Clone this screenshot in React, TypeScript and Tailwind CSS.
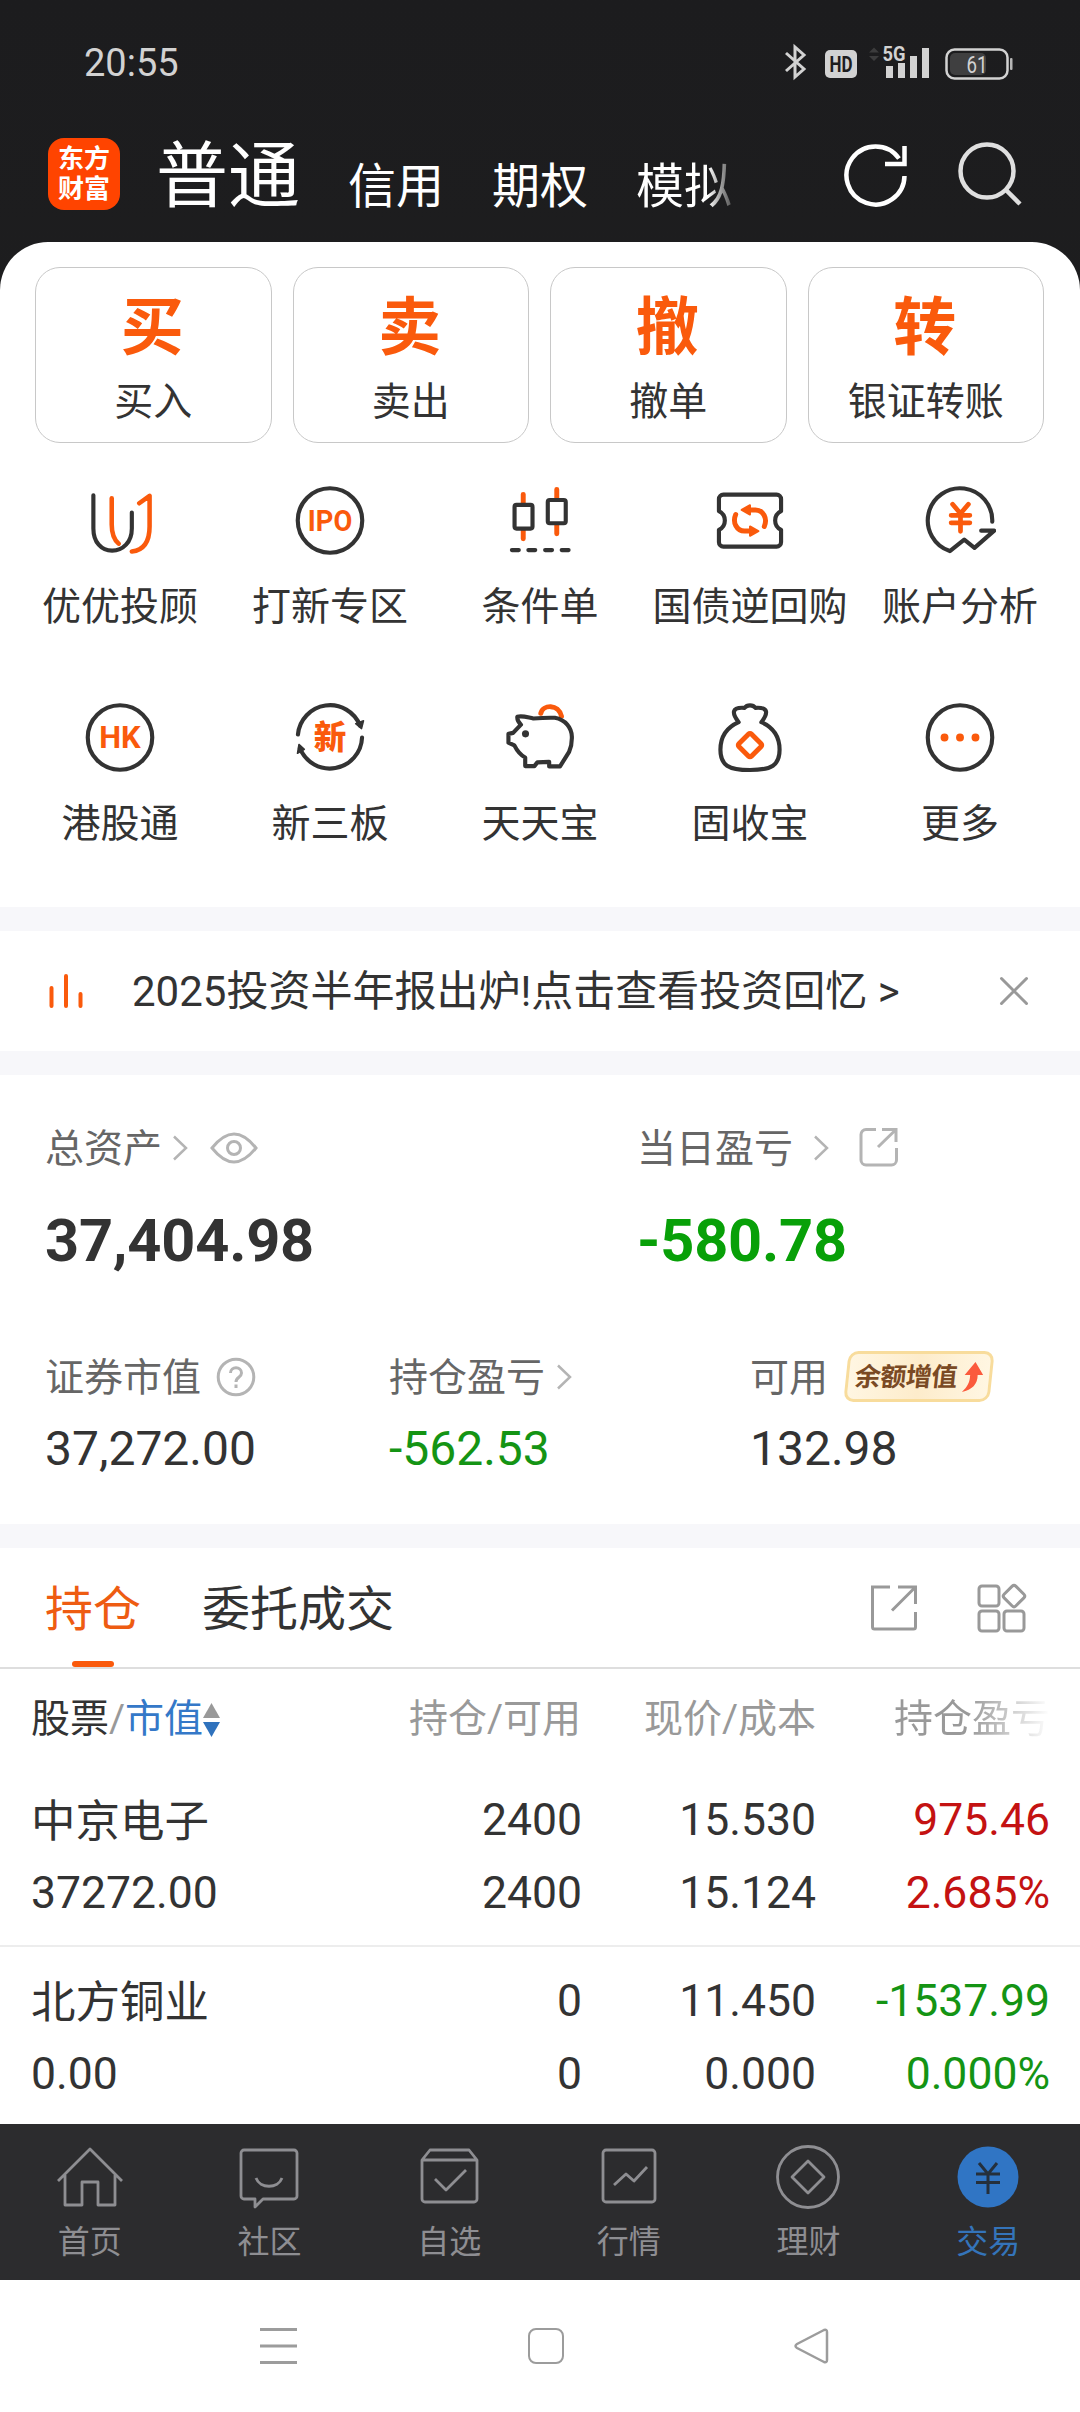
import React from 'react'
import clsx from 'clsx'

const ORANGE = '#fa5a0c'
const DARK = '#333333'

/* ---------- Status bar ---------- */

function StatusBar() {
  return (
    <div className="flex h-[126px] items-center justify-between pl-[84px] pr-[67px]">
      <span className="text-[38px] leading-none text-[#d2d2d2]">20:55</span>
      <svg className="mb-[2px]" width="232" height="40" viewBox="0 0 232 40" fill="none">
        {/* bluetooth */}
        <path d="M5 11l18 16-9 8V5l9 8L5 29" stroke="#d2d2d2" strokeWidth="3" />
        {/* HD */}
        <rect x="44" y="8" width="32" height="28" rx="5" fill="#d2d2d2" />
        <text x="60" y="30" textAnchor="middle" fontSize="22" fontWeight="700" textLength="23" lengthAdjust="spacingAndGlyphs" fill="#1d1d1e">HD</text>
        {/* signal */}
        <path d="M88 10.500l5-5 5 5zM88 14l5 5 5-5z" fill="#3c3c3d" />
        <text x="101.500" y="18.500" fontSize="20" fontWeight="700" textLength="23" lengthAdjust="spacingAndGlyphs" fill="#d2d2d2">5G</text>
        <path d="M105 24h7v12h-7zM117 21h7v15h-7zM129 14h7v22h-7zM141 6h7v30h-7z" fill="#d2d2d2" />
        {/* battery */}
        <rect x="165.500" y="7.500" width="61" height="29" rx="8" stroke="#d2d2d2" strokeWidth="2.500" />
        <rect x="169" y="11" width="36" height="22" rx="5" fill="#3f3f40" />
        <rect x="229" y="16" width="2.500" height="12" rx="1" fill="#b5b5b5" />
        <text x="196" y="30.500" textAnchor="middle" fontSize="24" textLength="21" lengthAdjust="spacingAndGlyphs" fill="#d2d2d2">61</text>
      </svg>
    </div>
  )
}

/* ---------- Header ---------- */

function Header() {
  return (
    <div className="flex h-[116px] text-white">
      <div className="ml-12 mt-3 flex h-[72px] w-[72px] flex-col items-center justify-center rounded-[16px] bg-[#ff4400] text-[26px] font-bold leading-[30px]">
        <span>东方</span>
        <span>财富</span>
      </div>
      <div className="ml-9 flex items-start gap-12 whitespace-nowrap">
        <span className="mt-[3px] text-[72px] leading-[96px]">普通</span>
        <span className="mt-[29px] text-[48px] leading-[64px]">信用</span>
        <span className="mt-[29px] text-[48px] leading-[64px]">期权</span>
        <span className="mt-[29px] bg-linear-to-r from-white from-75% to-[#555] bg-clip-text text-[48px] leading-[64px] text-transparent">模拟</span>
      </div>
      <svg className="ml-[111px] mt-[15px]" width="68" height="68" viewBox="0 0 68 68" fill="none" stroke="#fff" strokeWidth="4.500">
        <path d="M61.500 35A29 29 0 1 1 56 17.500" />
        <path d="M61.500 5v18H42" />
      </svg>
      <svg className="ml-[45px] mt-[15px]" width="68" height="68" viewBox="0 0 68 68" fill="none" stroke="#dfdfdf" strokeWidth="4.500">
        <circle cx="31" cy="30" r="26.500" />
        <path d="M50 49l14 14" />
      </svg>
    </div>
  )
}

/* ---------- Quick actions ---------- */

const actions = [
  { mark: '买', label: '买入' },
  { mark: '卖', label: '卖出' },
  { mark: '撤', label: '撤单' },
  { mark: '转', label: '银证转账' },
]

function QuickActions() {
  return (
    <div className="grid grid-cols-4 gap-[21px] pl-[35px] pr-9 pt-[25px]">
      {actions.map((a) => (
        <div key={a.label} className="flex h-[176px] flex-col items-center rounded-[25px] border border-[#c8c8c8]">
          <span className="mr-[2px] mt-[28px] text-[63px] font-bold leading-[64px] text-[#fa5a0c]">{a.mark}</span>
          <span className="mt-[20px] text-[39px] leading-[44px]">{a.label}</span>
        </div>
      ))}
    </div>
  )
}

/* ---------- Feature grid ---------- */

const YouIcon = () => (
  <>
    <path d="M9 10.500V44c0 14 8 22.500 19 22.500S48 58 48 44V28" />
    <path d="M27.600 13.500V40c0 9 2 15 7 19.500M55.500 18.500L66 11v31c0 15-6 24-18 25.500" stroke={ORANGE} strokeWidth="4.600" />
  </>
)

const IpoIcon = () => (
  <>
    <circle cx="36" cy="36" r="32.700" />
    <text x="36" y="46.800" textAnchor="middle" fontSize="30" fontWeight="700" textLength="45" lengthAdjust="spacingAndGlyphs" fill={ORANGE} stroke="none">IPO</text>
  </>
)

const CandleIcon = () => (
  <>
    <path d="M19 9.500V19M19 46v8.500M53 4.500V14M53 40v9.500" stroke={ORANGE} strokeWidth="5" />
    <rect x="10.200" y="20.200" width="18.200" height="24" rx="2" />
    <rect x="43.900" y="15.200" width="18.200" height="23.600" rx="2" />
    <path d="M7.500 66h7M24.200 66h7M41.200 66h7M58 66h7" />
  </>
)

const TicketIcon = () => (
  <>
    <path d="M9 9.700H63a4.500 4.500 0 0 1 4.500 4.500V26.500c-8 4-8 15 0 19V58a4.500 4.500 0 0 1-4.500 4.500H9A4.500 4.500 0 0 1 4.500 58V45.500c8-4 8-15 0-19V14.200A4.500 4.500 0 0 1 9 9.700z" />
    <g stroke={ORANGE} strokeWidth="5">
      <path d="M21.500 30c-3.500 8 1 16.700 9 16.700H37M50.500 42c3.500-8-1-16.700-9-16.700H35" />
      <path d="M36 42v9.500l8.500-4.800zM36 20.500v9.500l-8.500-4.700z" fill={ORANGE} strokeWidth="2" />
    </g>
  </>
)

const AnalysisIcon = () => (
  <>
    <path d="M68.700 37.300A32.700 32.700 0 1 0 25.700 67l14.600-11.700 10.400 8.400 20-17.400H57.500" />
    <path d="M28.500 19.500L36.500 29l8-9.500M27 30.800h19M27 38.300h19M36.500 29v18" stroke={ORANGE} strokeWidth="4.800" />
  </>
)

const HkIcon = () => (
  <>
    <circle cx="36" cy="36" r="32.700" />
    <text x="36" y="47" textAnchor="middle" fontSize="31" fontWeight="700" textLength="42" lengthAdjust="spacingAndGlyphs" fill={ORANGE} stroke="none">HK</text>
  </>
)

const XinIcon = () => (
  <>
    <path d="M3.500 33A32.700 32.700 0 0 1 66.500 24M68.500 36A32.700 32.700 0 0 1 5.500 47" />
    <path d="M62 23l8-3-2 8zM10 49l-7 4 1.500-9z" fill={DARK} strokeWidth="1.500" transform="translate(0 -1)" />
    <text x="36" y="47.500" textAnchor="middle" fontSize="33" fontWeight="900" fill={ORANGE} stroke="none">新</text>
  </>
)

const PigIcon = () => (
  <>
    <path d="M36.800 11.500c2-9 18-10 21 3" stroke={ORANGE} strokeWidth="5" />
    <path d="M13 15c5-1.500 10 .5 16.300 1.700C38 16 44 15.800 51 16c11 2 17 10 17.300 19 .2 6-.8 11-2.800 15.500L56.300 65.300h-11v-4.600l-12 .5-3 3.800H21v-8.700C15.500 53.500 12.500 49 10 44l-6-2.700v-9l4.700-1 8-8.300c-2.500-2.300-4-5-3.700-8z" />
    <circle cx="21.300" cy="32.300" r="3.600" fill={DARK} stroke="none" />
  </>
)

const BagIcon = () => (
  <>
    <path d="M24.500 20.500C12 26 6 36 6 48.500 6 64 14 69 36 69s30-5 30-20.500C66 36 60 26 47.500 20.500c7-9 7.500-15.500-6-14.500-2.500-3.500-8.500-3.500-11 0-13.500-1-13 5.500-6 14.500z" />
    <rect x="27" y="34.700" width="18" height="18" rx="2" transform="rotate(45 36 43.700)" stroke={ORANGE} strokeWidth="5" />
  </>
)

const MoreIcon = () => (
  <>
    <circle cx="36" cy="36" r="32.700" />
    <path d="M20.300 36h.01M36 36h.01M51.700 36h.01" stroke={ORANGE} strokeWidth="8" />
  </>
)

const features = [
  { label: '优优投顾', Icon: YouIcon },
  { label: '打新专区', Icon: IpoIcon },
  { label: '条件单', Icon: CandleIcon },
  { label: '国债逆回购', Icon: TicketIcon },
  { label: '账户分析', Icon: AnalysisIcon },
  { label: '港股通', Icon: HkIcon },
  { label: '新三板', Icon: XinIcon },
  { label: '天天宝', Icon: PigIcon },
  { label: '固收宝', Icon: BagIcon },
  { label: '更多', Icon: MoreIcon },
]

function FeatureGrid() {
  return (
    <div className="grid grid-cols-5 gap-y-[73px] px-[15px] pt-[42px]">
      {features.map(({ label, Icon }) => (
        <div key={label} className="flex h-[144px] flex-col items-center">
          <svg width="72" height="72" viewBox="0 0 72 72" fill="none" stroke={DARK} strokeWidth="4.200" strokeLinecap="round" strokeLinejoin="round">
            <Icon />
          </svg>
          <span className="mt-[29px] whitespace-nowrap text-[39px] leading-[44px]">{label}</span>
        </div>
      ))}
    </div>
  )
}

/* ---------- Notice ---------- */

function Notice() {
  return (
    <div className="flex h-[120px] items-center bg-white pl-[49px] pr-[51px]">
      <svg width="36" height="36" viewBox="0 0 36 36" stroke={ORANGE} strokeWidth="4" strokeLinecap="round">
        <path d="M2.500 15v18M17 3v30M31.500 21v12" />
      </svg>
      <span className="ml-[47px] mt-[2px] text-[42px] leading-none">2025投资半年报出炉!点击查看投资回忆 &gt;</span>
      <svg className="ml-auto" width="30" height="30" viewBox="0 0 30 30" stroke="#999" strokeWidth="3" strokeLinecap="round">
        <path d="M2.500 2.500l25 25M27.500 2.500l-25 25" />
      </svg>
    </div>
  )
}

/* ---------- Assets ---------- */

function Chevron({ className }: { className?: string }) {
  return (
    <svg className={className} width="16" height="26" viewBox="0 0 16 26" fill="none" stroke="#b4b4b4" strokeWidth="2.500">
      <path d="M2 1.500L14 13 2 24.500" />
    </svg>
  )
}

function Assets() {
  return (
    <div className="h-[449px] bg-white pl-[45px]">
      <div className="flex pt-[49px]">
        <div className="w-[592px]">
          <div className="flex h-12 items-center text-[39px] text-[#666]">
            <span className="mt-[2px]">总资产</span>
            <Chevron className="ml-[10px]" />
            <svg className="ml-[22px]" width="48" height="34" viewBox="0 0 48 34" fill="none" stroke="#b4b4b4" strokeWidth="3">
              <path d="M2 17C10 7 17 3 24 3s14 4 22 14c-8 10-15 14-22 14S10 27 2 17z" />
              <circle cx="24" cy="17" r="6.500" />
            </svg>
          </div>
          <div className="mt-[33px] text-[59.500px] font-bold leading-[72px] tracking-[-0.2px]">37,404.98</div>
        </div>
        <div>
          <div className="flex h-12 items-center text-[39px] text-[#666]">
            <span className="mt-[2px]">当日盈亏</span>
            <Chevron className="ml-[20px]" />
            <svg className="mb-[2px] ml-[30px]" width="40" height="40" viewBox="0 0 40 40" fill="none" stroke="#b4b4b4" strokeWidth="3">
              <path d="M17 2.500H7a5 5 0 0 0-5 5V33a5 5 0 0 0 5 5h25.500a5 5 0 0 0 5-5V21" />
              <path d="M23 2.500h14V15M37 2.500L19 20" />
            </svg>
          </div>
          <div className="mt-[33px] text-[59.500px] font-bold leading-[72px] tracking-[-0.2px] text-[#08a008]">-580.78</div>
        </div>
      </div>
      <div className="flex pt-[76px]">
        <div className="w-[344px]">
          <div className="flex h-12 items-center text-[39px] text-[#666]">
            <span className="mt-[2px]">证券市值</span>
            <svg className="ml-[15px]" width="40" height="40" viewBox="0 0 40 40" fill="none" stroke="#b4b4b4" strokeWidth="3">
              <circle cx="20" cy="20" r="17.800" />
              <path d="M14.500 16c0-7 11-7 11 0 0 4.500-5.500 4-5.500 9M20 27.500v3.500" />
            </svg>
          </div>
          <div className="mt-[18px] text-[48px] leading-[60px]">37,272.00</div>
        </div>
        <div className="w-[361px]">
          <div className="flex h-12 items-center text-[39px] text-[#666]">
            <span className="mt-[2px]">持仓盈亏</span>
            <Chevron className="ml-[11px]" />
          </div>
          <div className="mt-[18px] text-[48px] leading-[60px] text-[#149414]">-562.53</div>
        </div>
        <div>
          <div className="flex h-12 items-center text-[39px] text-[#666]">
            <span className="mt-[2px]">可用</span>
            <div className="mb-[2px] ml-[18px] flex h-[51px] w-[146px] -skew-x-6 items-center justify-center gap-[2px] rounded-[10px] border-[3px] border-[#f8dc9c] bg-linear-to-r from-[#fff6e2] via-[#fdeccb] to-[#fff6e2]">
              <span className="text-[26px] font-bold leading-none tracking-[-0.5px] text-[#7a4a24]">余额增值</span>
              <svg width="24" height="32" viewBox="0 0 24 32">
                <path d="M15 1l9 13h-5.500c1 9-4 15-14 17 5-5 7-10 6.500-17H5.500z" fill="#fb5a3c" />
              </svg>
            </div>
          </div>
          <div className="mt-[18px] text-[48px] leading-[60px]">132.98</div>
        </div>
      </div>
    </div>
  )
}

/* ---------- Holdings ---------- */

interface Holding {
  name: string
  value: string
  amount: string
  available: string
  price: string
  cost: string
  profit: string
  rate: string
  up: boolean
}

const holdings: Holding[] = [
  { name: '中京电子', value: '37272.00', amount: '2400', available: '2400', price: '15.530', cost: '15.124', profit: '975.46', rate: '2.685%', up: true },
  { name: '北方铜业', value: '0.00', amount: '0', available: '0', price: '11.450', cost: '0.000', profit: '-1537.99', rate: '0.000%', up: false },
]

function HoldingTabs() {
  return (
    <div className="flex h-[121px] items-center border-b-2 border-[#dedede] pl-[45px] pr-[52px] text-[48px]">
      <div className="relative flex h-full items-center pt-[5px] text-[#ee5c12]">
        持仓
        <span className="absolute bottom-0 left-[27px] h-[6px] w-[42px] rounded-full bg-[#fa5a0c]" />
      </div>
      <span className="ml-[61px] pt-[5px]">委托成交</span>
      <svg className="ml-auto" width="48" height="48" viewBox="0 0 48 48" fill="none" stroke="#999" strokeWidth="3">
        <path d="M20 3H2.500v40a2 2 0 0 0 2 2h39a2 2 0 0 0 2-2V28" />
        <path d="M28 3h17.500v17M45.500 3L22 26.500" />
      </svg>
      <svg className="ml-[58px]" width="52" height="52" viewBox="0 0 52 52" fill="none" stroke="#999" strokeWidth="3">
        <rect x="3" y="4" width="20" height="20" rx="3" />
        <rect x="3" y="29" width="20" height="20" rx="3" />
        <rect x="28" y="29" width="20" height="20" rx="3" />
        <rect x="29.800" y="5.800" width="16.500" height="16.500" rx="2.500" transform="rotate(45 38 14)" />
      </svg>
    </div>
  )
}

function HoldingTable() {
  return (
    <div>
      <div className="grid h-[97px] grid-cols-[340px_210px_235px_234px] items-center pl-[31px] pt-[4px] text-right text-[39px] text-[#999]">
        <div className="flex items-center">
          <span className="text-[#333]">股票</span>/<span className="text-[#3478c8]">市值</span>
          <svg width="17" height="36" viewBox="0 0 17 36">
            <path d="M0 16L8.500 1 17 16z" fill="#999" />
            <path d="M0 20l8.500 15L17 20z" fill="#2f72bd" />
          </svg>
        </div>
        <span>持仓/可用</span>
        <span>现价/成本</span>
        <span className="bg-linear-to-r from-[#999] from-65% to-white bg-clip-text text-transparent">持仓盈亏</span>
      </div>
      {holdings.map((h, i) => (
        <div
          key={h.name}
          className={clsx(
            'grid h-[181px] grid-cols-[340px_211px_234px_234px] content-start pl-[31px] pt-[18px] text-right text-[44.500px] leading-[73px]',
            i === 0 && 'border-b-2 border-[#ededed]'
          )}
        >
          <span className="h-[73px] pt-[2px] text-left">{h.name}</span>
          <span>{h.amount}</span>
          <span>{h.price}</span>
          <span className={h.up ? 'text-[#c41212]' : 'text-[#149414]'}>{h.profit}</span>
          <span className="text-left">{h.value}</span>
          <span>{h.available}</span>
          <span>{h.cost}</span>
          <span className={h.up ? 'text-[#c41212]' : 'text-[#149414]'}>{h.rate}</span>
        </div>
      ))}
    </div>
  )
}

/* ---------- Bottom navigation ---------- */

const tabs = [
  { label: '首页', icon: <path d="M2 38L34 6l32 32M9 32v30h17V39h16v23h17V32" /> },
  {
    label: '社区',
    icon: (
      <>
        <path d="M9 7h50a3 3 0 0 1 3 3v43a3 3 0 0 1-3 3H28l-8 8v-8H9a3 3 0 0 1-3-3V10a3 3 0 0 1 3-3z" />
        <path d="M21 35c4 11 22 11 26 0" />
      </>
    ),
  },
  {
    label: '自选',
    icon: (
      <>
        <path d="M7 17l8-10h39l8 10v39a3 3 0 0 1-3 3H10a3 3 0 0 1-3-3zM7 17h55" />
        <path d="M20 36l11 11 20-20" />
      </>
    ),
  },
  {
    label: '行情',
    icon: (
      <>
        <rect x="8" y="7" width="52" height="52" rx="3" />
        <path d="M19 42l12-11 8 7 13-14" />
      </>
    ),
  },
  {
    label: '理财',
    icon: (
      <>
        <circle cx="34" cy="34" r="30.500" />
        <path d="M34 18l16 16-16 16-16-16z" />
      </>
    ),
  },
]

function BottomNav() {
  return (
    <div className="grid h-[156px] grid-cols-6 bg-[#2c2c2e] pr-[2px] pt-[19px] text-[32px] text-[#8e8e92]">
      {tabs.map((t) => (
        <div key={t.label} className="flex flex-col items-center">
          <svg width="68" height="68" viewBox="0 0 68 68" fill="none" stroke="#8e8e92" strokeWidth="2.800" strokeLinejoin="round">
            {t.icon}
          </svg>
          <span className="mt-[11px] leading-10">{t.label}</span>
        </div>
      ))}
      <div className="flex flex-col items-center text-[#3474ba]">
        <svg width="68" height="68" viewBox="0 0 68 68" fill="none">
          <circle cx="34" cy="34" r="30.500" fill="#3075c4" />
          <path d="M25 20l9 11 9-11M22 31h24M22 39.500h24M34 31v20" stroke="#25303c" strokeWidth="3" />
        </svg>
        <span className="mt-[11px] leading-10">交易</span>
      </div>
    </div>
  )
}

function SystemNav() {
  return (
    <div className="flex h-[132px] items-center bg-white pl-[260px]">
      <svg width="37" height="38" viewBox="0 0 37 38" stroke="#9c9c9c" strokeWidth="3">
        <path d="M0 2.500h37M0 19h37M0 35.500h37" />
      </svg>
      <div className="ml-[231px] h-[36px] w-[36px] rounded-[8px] border-[2.500px] border-[#9c9c9c]" />
      <svg className="ml-[230px]" width="36" height="38" viewBox="0 0 36 38" fill="none" stroke="#9c9c9c" strokeWidth="2.500" strokeLinejoin="round">
        <path d="M3 17L30 3q3-1 3 2v28q0 3-3 2L3 21q-3-2 0-4z" />
      </svg>
    </div>
  )
}

export default function App() {
  return (
    <div className="flex h-[2412px] w-[1080px] flex-col overflow-hidden bg-[#f7f7fa] font-['Roboto','Noto_Sans_CJK_SC',sans-serif] text-[#333]">
      <div className="bg-linear-to-b from-[#1c1c1e] via-[#1e1e1f] to-[#262626]">
        <StatusBar />
        <Header />
        <div className="h-[665px] rounded-t-[48px] bg-white">
          <QuickActions />
          <FeatureGrid />
        </div>
      </div>
      <div className="mt-6">
        <Notice />
      </div>
      <div className="mt-6">
        <Assets />
      </div>
      <div className="mt-6 h-[576px] bg-white">
        <HoldingTabs />
        <HoldingTable />
      </div>
      <BottomNav />
      <SystemNav />
    </div>
  )
}
